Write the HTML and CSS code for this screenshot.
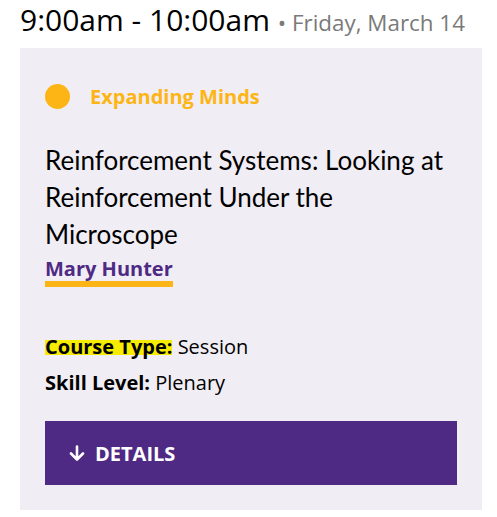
FILE: index.html
```html
<!DOCTYPE html>
<html lang="en">
<head>
  <meta charset="UTF-8">
  <meta name="viewport" content="width=device-width, initial-scale=1.0">
  <title>Session</title>
  <link rel="stylesheet" href="styles.css">
</head>
<body>

  <div class="session">
    <h2 class="time">9:00am - 10:00am <span class="date">&bull; Friday, March 14</span></h2>

    <div class="card">
      <div class="track">
        <span class="dot"></span>
        <span class="track-name">Expanding Minds</span>
      </div>

      <h3 class="title">Reinforcement Systems: Looking at Reinforcement Under the Microscope</h3>
      <a class="speaker" href="#">Mary Hunter</a>

      <ul class="meta">
        <li><strong class="mark">Course Type:</strong> Session</li>
        <li><strong>Skill Level:</strong> Plenary</li>
      </ul>

      <button type="button" class="details">
        <svg width="16" height="16" viewBox="0 0 16 16" fill="none" stroke="#fff" stroke-width="2.6" stroke-linecap="round" stroke-linejoin="round">
          <path d="M8 1.5v13M2 8.5l6 6 6-6"/>
        </svg>
        DETAILS
      </button>
    </div>
  </div>

</body>
</html>
```

FILE: styles.css
```css
body {
  margin: 0;
  background-color: #fff;
  font-family: "Open Sans", sans-serif;
  color: #000;
}

.session {
  padding: 0 15px 0 20px;
}

.time {
  margin: 0 0 5px;
  font-size: 30px;
  font-weight: 400;
  line-height: 40px;
}

.date {
  font-size: 22.4px;
  color: #7a7a7a;
}

.card {
  background-color: #f0edf4;
  padding: 35px 25px 25px 25px;
  height: 462px;
  box-sizing: border-box;
}

.track {
  display: flex;
  align-items: center;
  gap: 20px;
}

.dot {
  width: 25px;
  height: 25px;
  border-radius: 50%;
  background-color: #fdb515;
}

.track-name {
  color: #fdb515;
  font-weight: 700;
  font-size: 20px;
}

.title {
  font-family: Lato, sans-serif;
  font-weight: 400;
  font-size: 26px;
  line-height: 37px;
  margin: 32px 0 0;
}

.speaker {
  display: block;
  width: fit-content;
  margin-top: 3px;
  color: #4e2a84;
  font-weight: 700;
  font-size: 20px;
  line-height: 25px;
  text-decoration: none;
  border-bottom: 6px solid #fdb515;
}

.meta {
  list-style: none;
  margin: 42px 0 0;
  padding: 0;
  font-size: 20px;
}

.meta li {
  line-height: 36px;
}

.mark {
  background: linear-gradient(to bottom, transparent 27%, #f5ec00 27%, #f5ec00 82%, transparent 82%);
}

.details {
  display: flex;
  align-items: center;
  gap: 10px;
  width: 100%;
  height: 64px;
  margin-top: 20px;
  padding: 0 24px;
  border: none;
  background-color: #4e2a84;
  color: #fff;
  font-family: "Open Sans", sans-serif;
  font-weight: 700;
  font-size: 20px;
  cursor: pointer;
}
```
